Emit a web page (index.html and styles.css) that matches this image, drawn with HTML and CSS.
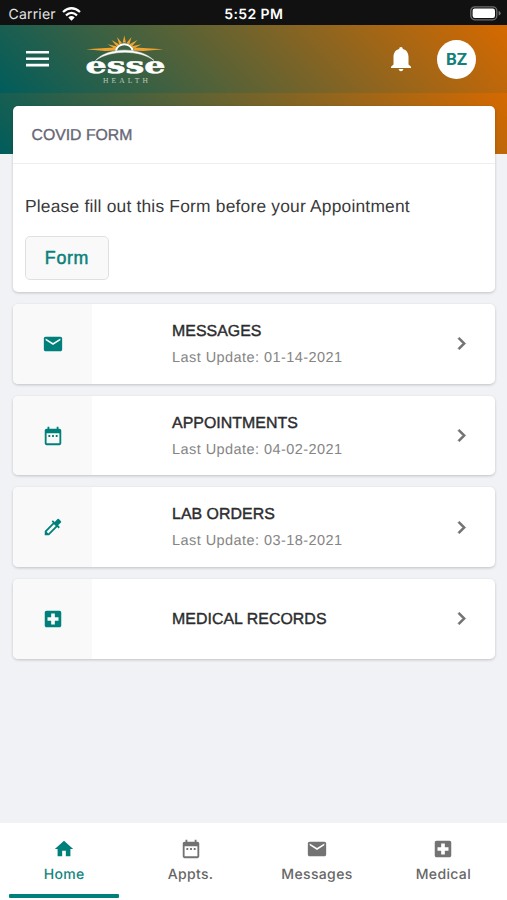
FILE: index.html
```html
<!DOCTYPE html>
<html lang="en">
<head>
<meta charset="utf-8">
<title>Esse Health</title>
<link rel="stylesheet" href="styles.css">
</head>
<body>
<svg width="0" height="0" class="defs">
  <symbol id="mail" viewBox="0 0 24 24"><path d="M20 4H4c-1.100 0-2 .9-2 2v12c0 1.100.9 2 2 2h16c1.100 0 2-.9 2-2V6c0-1.100-.9-2-2-2zm0 4-8 5-8-5V6l8 5 8-5z"/></symbol>
  <symbol id="calendar" viewBox="0 0 24 24"><path d="M9 11H7v2h2zm4 0h-2v2h2zm4 0h-2v2h2zm2-7h-1V2h-2v2H8V2H6v2H5c-1.110 0-2 .9-2 2v14c0 1.100.89 2 2 2h14c1.100 0 2-.9 2-2V6c0-1.100-.9-2-2-2zm0 16H5V9h14z"/></symbol>
  <symbol id="dropper" viewBox="0 0 24 24"><path d="M20.710 5.630l-2.340-2.340a1 1 0 0 0-1.410 0l-3.120 3.120-1.930-1.910-1.410 1.410 1.420 1.420L3 16.250V21h4.750l8.920-8.920 1.420 1.420 1.410-1.410-1.920-1.920 3.120-3.120c.4-.4.4-1.030.010-1.420zM6.920 19 5 17.080l8.060-8.060 1.920 1.920z"/></symbol>
  <symbol id="medical" viewBox="0 0 24 24"><path d="M19 3H5c-1.100 0-1.990.9-1.990 2L3 19c0 1.100.9 2 2 2h14c1.100 0 2-.9 2-2V5c0-1.100-.9-2-2-2zm-1 11h-4v4h-4v-4H6v-4h4V6h4v4h4z"/></symbol>
  <symbol id="home" viewBox="0 0 24 24"><path d="M10 20v-6h4v6h5v-8h3L12 3 2 12h3v8z"/></symbol>
  <symbol id="chevron" viewBox="0 0 24 24"><path d="M10 6 8.590 7.410 13.170 12l-4.580 4.590L10 18l6-6z"/></symbol>
</svg>
<div class="app">
  <div class="status">
    <div class="carrier"><span>Carrier</span>
      <svg width="19" height="14" viewBox="0 0 19 14" fill="none" stroke="#fff" stroke-width="2.300"><path d="M1 5Q9.500-2.500 18 5M4 8.300Q9.500 3.500 15 8.300"/><path d="M6.300 10.400Q9.500 7.800 12.700 10.400L9.500 13.800z" fill="#fff" stroke="none"/></svg>
    </div>
    <div class="time">5:52 PM</div>
    <div class="battery"><svg width="31" height="15" viewBox="0 0 31 15"><rect x=".8" y=".8" width="26" height="13" rx="4" fill="none" stroke="#6d6d6d" stroke-width="1.300"/><rect x="2.600" y="2.600" width="22.400" height="9.400" rx="2.200" fill="#fff"/><path d="M28.600 5q2 .6 2 2.300t-2 2.300z" fill="#777"/></svg></div>
  </div>
  <header class="bar">
    <svg class="menu" width="23" height="16" viewBox="0 0 23 16" fill="#fff"><path d="M0 0h23v2.600H0zM0 6.400h23V9H0zM0 12.800h23v2.600H0z"/></svg>
    <svg class="logo" width="84" height="50" viewBox="0 0 84 50">
      <path fill="#f2a32b" d="M1 14.200 29 12.400 31 15.600 20 16zM78.500 14.200 50 12.400 48 15.600 58 16zM22.500 9.300l9 2-1 2.700zM26.500 5l7.500 4.300-2.200 2.300zM32 2l5 6-2.800 1.600zM39.300.5l1.600 7h-3.200zM46.500 2l-2.200 7.600-2.800-1.600zM52.500 5l-5.700 6.600-2.300-2.300zM56.500 9.300l-8.500 4.700-1.200-2.700z"/>
      <path d="M31 15.600a8.400 7.500 0 0 1 16.600 0" fill="#3d6442" stroke="#fff" stroke-width="2"/>
      <path d="M10.500 25.500C23 12 55 11.500 69 25.500 55 14.600 25 14.600 10.500 25.500z" fill="#fff" stroke="#fff" stroke-width=".5"/>
      <text class="esse" x="0.500" y="37.800" textLength="80" lengthAdjust="spacingAndGlyphs">esse</text>
      <text class="health" x="18" y="47.500" textLength="45">HEALTH</text>
    </svg>
    <svg class="bell" width="20" height="25" viewBox="0 0 20 25" fill="#fff"><path d="M10 0c1.200 0 1.800.8 1.800 2.100 3.700.9 5.700 4 5.700 7.900v7.500l2.500 2.300v1.300H0v-1.300l2.500-2.300V10c0-3.900 2-7 5.700-7.900C8.200.8 8.800 0 10 0zM7.700 22h4.600c0 1.300-1 2.200-2.300 2.200S7.700 23.300 7.700 22z"/></svg>
    <div class="avatar">BZ</div>
  </header>
  <main>
    <section class="card form-card">
      <h2>COVID FORM</h2>
      <div class="form-body"><p>Please fill out this Form before your Appointment</p><button>Form</button></div>
    </section>
    <section class="card row"><div class="tile"><svg><use href="#mail"/></svg></div><div class="info"><h3>MESSAGES</h3><p>Last Update: 01-14-2021</p></div><svg class="chev"><use href="#chevron"/></svg></section>
    <section class="card row"><div class="tile"><svg><use href="#calendar"/></svg></div><div class="info"><h3>APPOINTMENTS</h3><p>Last Update: 04-02-2021</p></div><svg class="chev"><use href="#chevron"/></svg></section>
    <section class="card row"><div class="tile"><svg><use href="#dropper"/></svg></div><div class="info"><h3>LAB ORDERS</h3><p>Last Update: 03-18-2021</p></div><svg class="chev"><use href="#chevron"/></svg></section>
    <section class="card row"><div class="tile"><svg><use href="#medical"/></svg></div><div class="info"><h3>MEDICAL RECORDS</h3></div><svg class="chev"><use href="#chevron"/></svg></section>
  </main>
  <nav>
    <a class="active"><svg><use href="#home"/></svg><span>Home</span></a>
    <a><svg><use href="#calendar"/></svg><span>Appts.</span></a>
    <a><svg><use href="#mail"/></svg><span>Messages</span></a>
    <a><svg><use href="#medical"/></svg><span>Medical</span></a>
  </nav>
</div>
</body>
</html>
```
FILE: styles.css
```css
* { box-sizing: border-box; }
body { margin: 0; font-family: "Liberation Sans", Arial, sans-serif; text-rendering: geometricPrecision; }
h2, h3, p { margin: 0; font-weight: 400; white-space: nowrap; }
.defs { display: none; }
.app { width: 507px; height: 900px; display: flex; flex-direction: column; background: #f0f2f6; overflow: hidden; }
.status { height: 25px; flex: none; background: #111; color: #fff; display: grid; grid-template-columns: 1fr auto 1fr; align-items: center; padding: 3px 6px 0 8.500px; font: 400 14px Inter, sans-serif; }
.carrier { display: flex; align-items: center; gap: 6px; color: #e4e4e4; letter-spacing: .2px; }
.carrier svg { margin-bottom: 1px; }
.time { font-weight: 600; letter-spacing: .4px; margin-left: -2px; }
.battery { display: flex; justify-content: flex-end; margin-bottom: 1px; }
.bar { height: 68px; flex: none; display: flex; align-items: center; padding: 0 31px 0 26px; background: linear-gradient(45deg, #005d5c, #d66900); }
.menu { margin-bottom: 1px; }
.logo { margin: 2px 0 0 36px; }
.esse { font: 700 22px "DejaVu Serif", serif; fill: #fff; stroke: #fff; stroke-width: .5px; }
.health { font: 400 7.500px "Liberation Serif", serif; fill: #b9c9b6; }
.bell { margin-left: auto; }
.avatar { width: 39px; height: 39px; margin: 1px 0 0 26px; border-radius: 50%; background: #fff; color: #13807a; display: flex; align-items: center; justify-content: center; font: 700 17px Roboto, sans-serif; }
main { flex: 1; padding: 13px 12px 0 13px; display: flex; flex-direction: column; gap: 12px; background: linear-gradient(45deg, #005d5c, #d66900) 0 0 / 100% 61px no-repeat, #f0f2f6; }
.card { background: #fff; border-radius: 5px; box-shadow: 0 1px 3px rgba(0, 0, 0, .2); overflow: hidden; flex: none; }
.form-card { height: 186px; }
.form-card h2 { height: 58px; line-height: 59px; padding-left: 18.500px; border-bottom: 1px solid #eee; font-size: 15.800px; color: #666675; -webkit-text-stroke: .35px #666675; }
.form-body { padding: 31px 12px; }
.form-body p { font-size: 17.400px; line-height: 22px; letter-spacing: .2px; color: #3a3a3c; }
button { display: block; width: 84px; height: 44px; margin-top: 18.500px; padding: 1px 0 0; border: 1px solid #e0e0e0; border-radius: 5px; background: #f9f9f9; font: 400 17.800px "Liberation Sans", sans-serif; letter-spacing: .7px; color: #0c807b; -webkit-text-stroke: .5px #0c807b; }
.row { height: 79.700px; display: flex; align-items: center; padding-right: 21px; }
.tile { width: 79px; height: 100%; background: #f9f9f9; display: flex; align-items: center; justify-content: center; }
.tile svg { width: 22px; height: 22px; fill: #00807b; }
.info { margin-left: 80px; padding-top: 2px; flex: 1; }
.info h3 { font-size: 15.900px; line-height: 22px; letter-spacing: .04px; color: #2c2c2e; -webkit-text-stroke: .4px #2c2c2e; }
.info p { font-size: 14.500px; line-height: 22px; margin-top: 4px; letter-spacing: .44px; color: #858585; }
.chev { width: 25px; height: 25px; fill: #737373; stroke: #737373; stroke-width: .6px; }
nav { height: 77px; flex: none; background: #fff; display: grid; grid-template-columns: repeat(4, 126.400px); padding-left: 1px; }
nav a { display: flex; flex-direction: column; align-items: center; padding-top: 15px; color: #666; font: 500 14px/20px Inter, sans-serif; letter-spacing: .35px; }
nav svg { width: 22px; height: 22px; fill: #737373; margin-bottom: 5px; }
nav .active { color: #13847e; }
nav .active svg { fill: #00807b; }
nav .active::after { content: ""; width: 110px; height: 4px; border-radius: 1px; background: #00807b; margin-top: 9px; }
```
